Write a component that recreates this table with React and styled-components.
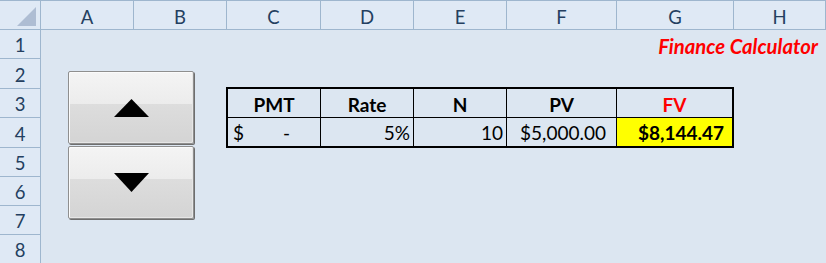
import React from "react";
import styled, { createGlobalStyle } from "styled-components";

const GlobalStyle = createGlobalStyle`
  html, body { margin: 0; padding: 0; background: #dce6f1; }
  body { font-family: Lato, "Open Sans", sans-serif; }
`;

const COLS = ["A", "B", "C", "D", "E", "F", "G", "H"];
const ROWS = [1, 2, 3, 4, 5, 6, 7, 8];

const Sheet = styled.div`
  display: grid;
  grid-template-columns: 41px 93px 93px 94px 93px 93px 110px 117px 1fr;
  grid-template-rows: 30px 29px 30px 29px 30px 29px 29px 29px 29px;
  width: 826px;
  height: 263px;
  overflow: hidden;
  background: #dce6f1;
  font-family: Lato, "Open Sans", sans-serif;
`;

const HeadCell = styled.div`
  grid-row: ${(p) => p.$row};
  grid-column: ${(p) => p.$col};
  display: flex;
  align-items: center;
  justify-content: center;
  box-sizing: border-box;
  padding-top: ${(p) => (p.$row === 1 ? 4 : 2)}px;
  background: #dfe9f5;
  border-right: 1px solid #9eb6ce;
  border-bottom: 1px solid #9eb6ce;
  border-top: ${(p) => (p.$row === 1 ? "1px solid #9eb6ce" : "none")};
  color: #243f60;
  font-size: 18.5px;
`;

const Corner = styled(HeadCell)`
  padding: 0;
  align-items: flex-start;
  justify-content: flex-start;
  svg {
    margin: 6px 0 0 17px;
  }
`;

const Title = styled.div`
  grid-row: 2;
  grid-column: 8 / 10;
  justify-self: end;
  align-self: center;
  padding: 3px 8px 0 0;
  color: #ff0000;
  font-size: 20.3px;
  font-weight: 700;
  font-style: italic;
  white-space: nowrap;
`;

const Spinner = styled.div`
  grid-column: 2 / 4;
  grid-row: 3 / 10;
  display: flex;
  flex-direction: column;
  gap: 2px;
  padding: 12px 0 0 27px;
`;

const SpinButton = styled.button`
  width: 126px;
  height: 73px;
  padding: 0;
  display: flex;
  align-items: center;
  justify-content: center;
  box-sizing: border-box;
  border: 1px solid #8f8f8f;
  border-radius: 2px;
  background: linear-gradient(
    #f4f4f4 0%,
    #ececec 45%,
    #dddddd 45%,
    #d4d4d4 100%
  );
  box-shadow: 1px 1px 0 #6e6e6e, inset 1px 1px 0 #fbfbfb,
    inset -1px -1px 0 #e6e6e6;
  cursor: pointer;
`;

const Calc = styled.div`
  grid-column: 4 / 9;
  grid-row: 4 / 6;
  margin: -2px 0 0 -1px;
  border: 2px solid #000;
  display: grid;
  grid-template-columns: 93px 93px 93px 110px 1fr;
  grid-template-rows: 29px 1fr;
  font-size: 19px;
  color: #000;
`;

const Cell = styled.div`
  display: flex;
  align-items: center;
  justify-content: ${(p) =>
    p.$align === "right"
      ? "flex-end"
      : p.$align === "split"
      ? "space-between"
      : "center"};
  box-sizing: border-box;
  padding: ${(p) => (p.$head ? "3px 0 0" : `0 ${p.$pad || 0}px 0 ${p.$left || 0}px`)};
  border-right: ${(p) => (p.$last ? "none" : "1px solid #000")};
  border-bottom: ${(p) => (p.$head ? "1px solid #000" : "none")};
  font-weight: ${(p) => (p.$bold ? 700 : 400)};
  color: ${(p) => (p.$red ? "#ff0000" : "#000")};
  background: ${(p) => p.$fill || "transparent"};
  white-space: nowrap;
`;

const headers = ["PMT", "Rate", "N", "PV", "FV"];

export default function App() {
  return (
    <>
      <GlobalStyle />
      <Sheet>
        <Corner $row={1} $col={1}>
          <svg width="19" height="19" viewBox="0 0 19 19">
            <polygon points="19,0 19,19 0,19" fill="#aebdd3" />
          </svg>
        </Corner>
        {COLS.map((c, i) => (
          <HeadCell key={c} $row={1} $col={i + 2}>
            {c}
          </HeadCell>
        ))}
        {ROWS.map((r) => (
          <HeadCell key={r} $row={r + 1} $col={1}>
            {r}
          </HeadCell>
        ))}

        <Title>Finance Calculator</Title>

        <Spinner>
          <SpinButton aria-label="Increase">
            <svg width="35" height="18" viewBox="0 0 35 18">
              <polygon points="17.5,0 35,18 0,18" fill="#000" />
            </svg>
          </SpinButton>
          <SpinButton aria-label="Decrease">
            <svg width="35" height="19" viewBox="0 0 35 19">
              <polygon points="0,0 35,0 17.5,19" fill="#000" />
            </svg>
          </SpinButton>
        </Spinner>

        <Calc>
          {headers.map((h, i) => (
            <Cell key={h} $head $bold $red={h === "FV"} $last={i === 4}>
              {h}
            </Cell>
          ))}
          <Cell $align="split" $left={5} $pad={30}>
            <span>$</span>
            <span>-</span>
          </Cell>
          <Cell $align="right" $pad={3}>5%</Cell>
          <Cell $align="right" $pad={3}>10</Cell>
          <Cell $align="right" $pad={10}>$5,000.00</Cell>
          <Cell $align="right" $pad={8} $bold $last $fill="#ffff00">
            $8,144.47
          </Cell>
        </Calc>
      </Sheet>
    </>
  );
}
